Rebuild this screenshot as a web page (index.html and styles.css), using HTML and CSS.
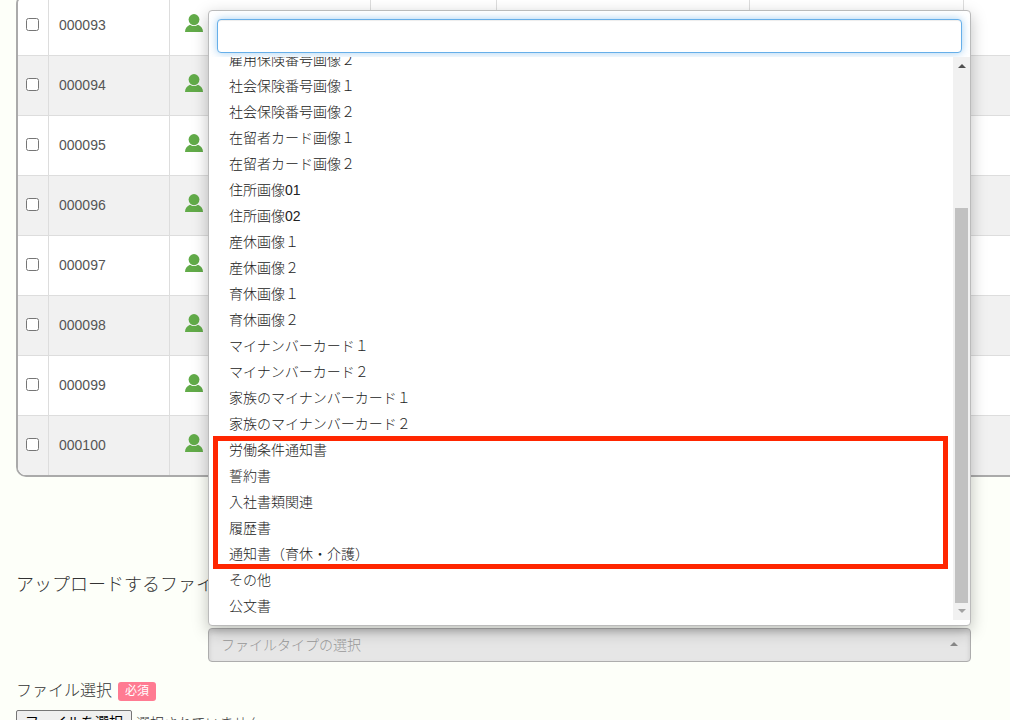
FILE: index.html
```html
<!DOCTYPE html>
<html lang="ja">
<head>
  <meta charset="UTF-8">
  <meta name="viewport" content="width=device-width, initial-scale=1.0">
  <title>ファイルアップロード</title>
  <link rel="stylesheet" href="styles.css">
</head>
<body>
  <svg width="0" height="0" class="sprite" aria-hidden="true">
    <symbol id="person" viewBox="0 0 18 18">
      <ellipse cx="9" cy="5.6" rx="5.4" ry="5.6"/>
      <path d="M0 18c0-3.400 2-6 5-7.200 1.200.900 2.500 1.300 4 1.300s2.800-.400 4-1.300c3 1.200 5 3.800 5 7.200z"/>
    </symbol>
  </svg>

  <div class="table-wrap">
    <table class="staff-table">
      <colgroup>
        <col class="col-check">
        <col class="col-code">
        <col class="col-name">
        <col class="col-kana">
        <col class="col-dept">
        <col class="col-post">
        <col>
      </colgroup>
      <tbody>
        <tr><td><input type="checkbox" aria-label="000093"></td><td>000093</td><td><svg class="person"><use href="#person"/></svg></td><td></td><td></td><td></td><td></td></tr>
        <tr><td><input type="checkbox" aria-label="000094"></td><td>000094</td><td><svg class="person"><use href="#person"/></svg></td><td></td><td></td><td></td><td></td></tr>
        <tr><td><input type="checkbox" aria-label="000095"></td><td>000095</td><td><svg class="person"><use href="#person"/></svg></td><td></td><td></td><td></td><td></td></tr>
        <tr><td><input type="checkbox" aria-label="000096"></td><td>000096</td><td><svg class="person"><use href="#person"/></svg></td><td></td><td></td><td></td><td></td></tr>
        <tr><td><input type="checkbox" aria-label="000097"></td><td>000097</td><td><svg class="person"><use href="#person"/></svg></td><td></td><td></td><td></td><td></td></tr>
        <tr><td><input type="checkbox" aria-label="000098"></td><td>000098</td><td><svg class="person"><use href="#person"/></svg></td><td></td><td></td><td></td><td></td></tr>
        <tr><td><input type="checkbox" aria-label="000099"></td><td>000099</td><td><svg class="person"><use href="#person"/></svg></td><td></td><td></td><td></td><td></td></tr>
        <tr><td><input type="checkbox" aria-label="000100"></td><td>000100</td><td><svg class="person"><use href="#person"/></svg></td><td></td><td></td><td></td><td></td></tr>
      </tbody>
    </table>
  </div>

  <form class="upload">
    <h2>アップロードするファイル</h2>

    <div class="select">
      <button type="button" class="select-toggle" aria-expanded="true">
        ファイルタイプの選択
        <span class="arrow up"></span>
      </button>
      <div class="dropdown">
        <input type="text" class="search" aria-label="検索">
        <div class="dropdown-body">
          <ul class="options">
            <li>雇用保険番号画像２</li>
            <li>社会保険番号画像１</li>
            <li>社会保険番号画像２</li>
            <li>在留者カード画像１</li>
            <li>在留者カード画像２</li>
            <li>住所画像01</li>
            <li>住所画像02</li>
            <li>産休画像１</li>
            <li>産休画像２</li>
            <li>育休画像１</li>
            <li>育休画像２</li>
            <li>マイナンバーカード１</li>
            <li>マイナンバーカード２</li>
            <li>家族のマイナンバーカード１</li>
            <li>家族のマイナンバーカード２</li>
            <li class="marked">
              <ul>
                <li>労働条件通知書</li>
                <li>誓約書</li>
                <li>入社書類関連</li>
                <li>履歴書</li>
                <li>通知書（育休・介護）</li>
              </ul>
            </li>
            <li>その他</li>
            <li>公文書</li>
          </ul>
          <div class="scrollbar">
            <span class="arrow up"></span>
            <span class="thumb"></span>
            <span class="arrow down"></span>
          </div>
        </div>
      </div>
    </div>

    <div class="field-title">ファイル選択 <span class="badge">必須</span></div>
    <label class="file">
      <input type="file">
      <span class="file-button">ファイルを選択</span>
      <span>選択されていません</span>
    </label>
  </form>
</body>
</html>
```

FILE: styles.css
```css
* {
  box-sizing: border-box;
}
body {
  margin: 0;
  padding-left: 16px;
  height: 100vh;
  overflow: hidden;
  background: #fdfff9;
  color: #333;
  font-family: "Liberation Sans", "Noto Sans CJK JP", sans-serif;
  font-size: 14px;
  font-weight: 300;
}
ul {
  list-style: none;
  margin: 0;
  padding: 0;
}
.sprite {
  position: absolute;
}

/* staff table, runs past the right edge */
.table-wrap {
  margin-top: -6px;
  margin-right: -40px;
  border: 2px solid #aaa;
  border-radius: 10px;
  overflow: hidden;
}
.staff-table {
  width: 100%;
  table-layout: fixed;
  border-collapse: separate;
  border-spacing: 0;
  background: #fff;
  color: #555;
}
.staff-table tr:nth-child(even) {
  background: #f1f1f1;
}
.staff-table td {
  height: 60px;
  padding: 0 10px 2px;
  border-right: 1px solid #ddd;
  border-bottom: 1px solid #ddd;
}
.staff-table tr:last-child td {
  height: 59px;
  border-bottom: none;
}
.staff-table td:first-child {
  padding: 0 8px 2px;
}
.staff-table td:nth-child(3) {
  padding: 0 15px 2px;
}
.staff-table input {
  display: block;
  margin: 0;
}
.col-check { width: 31px; }
.col-code { width: 121px; }
.col-name { width: 201px; }
.col-kana { width: 126px; }
.col-dept { width: 253px; }
.col-post { width: 214px; }
.person {
  display: block;
  width: 18px;
  height: 18px;
  margin-bottom: 4px;
  fill: #62ab49;
}

/* upload form */
.upload h2 {
  margin: 95px 0 0;
  font-size: 18px;
  font-weight: 300;
  line-height: 26px;
}
.select {
  position: relative;
  margin: 30px 39px 0 192px;
}
.select-toggle {
  display: flex;
  align-items: center;
  justify-content: space-between;
  width: 100%;
  height: 34px;
  padding: 0 12px 2px;
  border: 1px solid #adadad;
  border-radius: 4px;
  background: #e6e6e6;
  box-shadow: inset 0 3px 5px rgba(0, 0, 0, 0.125);
  color: #999;
  font: inherit;
}
.arrow {
  border: 4px solid transparent;
}
.arrow.up {
  border-top: none;
  border-bottom-color: #888;
}
.arrow.down {
  border-bottom: none;
  border-top-color: #a3a3a3;
}
.dropdown {
  position: absolute;
  left: 0;
  right: 0;
  bottom: 100%;
  margin-bottom: 2px;
  padding: 8px 0 5px;
  border: 1px solid #bbb;
  border-radius: 4px;
  background: #fff;
  box-shadow: 0 5px 16px rgba(0, 0, 0, 0.25);
}
.search {
  display: block;
  width: calc(100% - 16px);
  height: 34px;
  margin: 0 8px 4px;
  padding: 6px 12px;
  border: 1px solid #66afe9;
  border-radius: 4px;
  outline: none;
  box-shadow: inset 0 1px 1px rgba(0, 0, 0, 0.075), 0 0 8px rgba(102, 175, 233, 0.6);
  font: inherit;
}
.dropdown-body {
  position: relative;
  display: flex;
  height: 563px;
  background: #fff;
}
/* scrolled to the end of the list */
.options {
  flex: 1;
  display: flex;
  flex-direction: column;
  justify-content: flex-end;
  overflow: hidden;
  padding-bottom: 1px;
  color: #222;
  line-height: 26px;
}
.options li {
  flex: none;
  padding-left: 20px;
}
.options .marked {
  position: relative;
  padding: 0;
}
.marked::after {
  content: "";
  position: absolute;
  inset: -1px 5px -2px 4px;
  border: 5px solid #ff2600;
}
.scrollbar {
  display: flex;
  flex-direction: column;
  align-items: center;
  width: 17px;
  padding: 7px 0;
  background: #f1f1f1;
}
.scrollbar .arrow.up {
  border-bottom-color: #505050;
}
.thumb {
  width: 13px;
  height: 395px;
  margin: auto 0 6px;
  background: #c1c1c1;
}

.field-title {
  display: flex;
  align-items: center;
  gap: 6px;
  margin-top: 17px;
  font-size: 16px;
  line-height: 24px;
}
.badge {
  padding: 0 7px;
  border-radius: 3px;
  background: #ff7b92;
  color: #fff;
  font-size: 12px;
  font-weight: 400;
  line-height: 19px;
}
.file {
  display: flex;
  align-items: center;
  gap: 4px;
  margin-top: 7px;
}
.file input {
  position: absolute;
  opacity: 0;
}
.file-button {
  padding: 0 8px;
  border: 1px solid #767676;
  border-radius: 2px;
  background: #efefef;
  color: #000;
  font-weight: 400;
  line-height: 22px;
}
```
